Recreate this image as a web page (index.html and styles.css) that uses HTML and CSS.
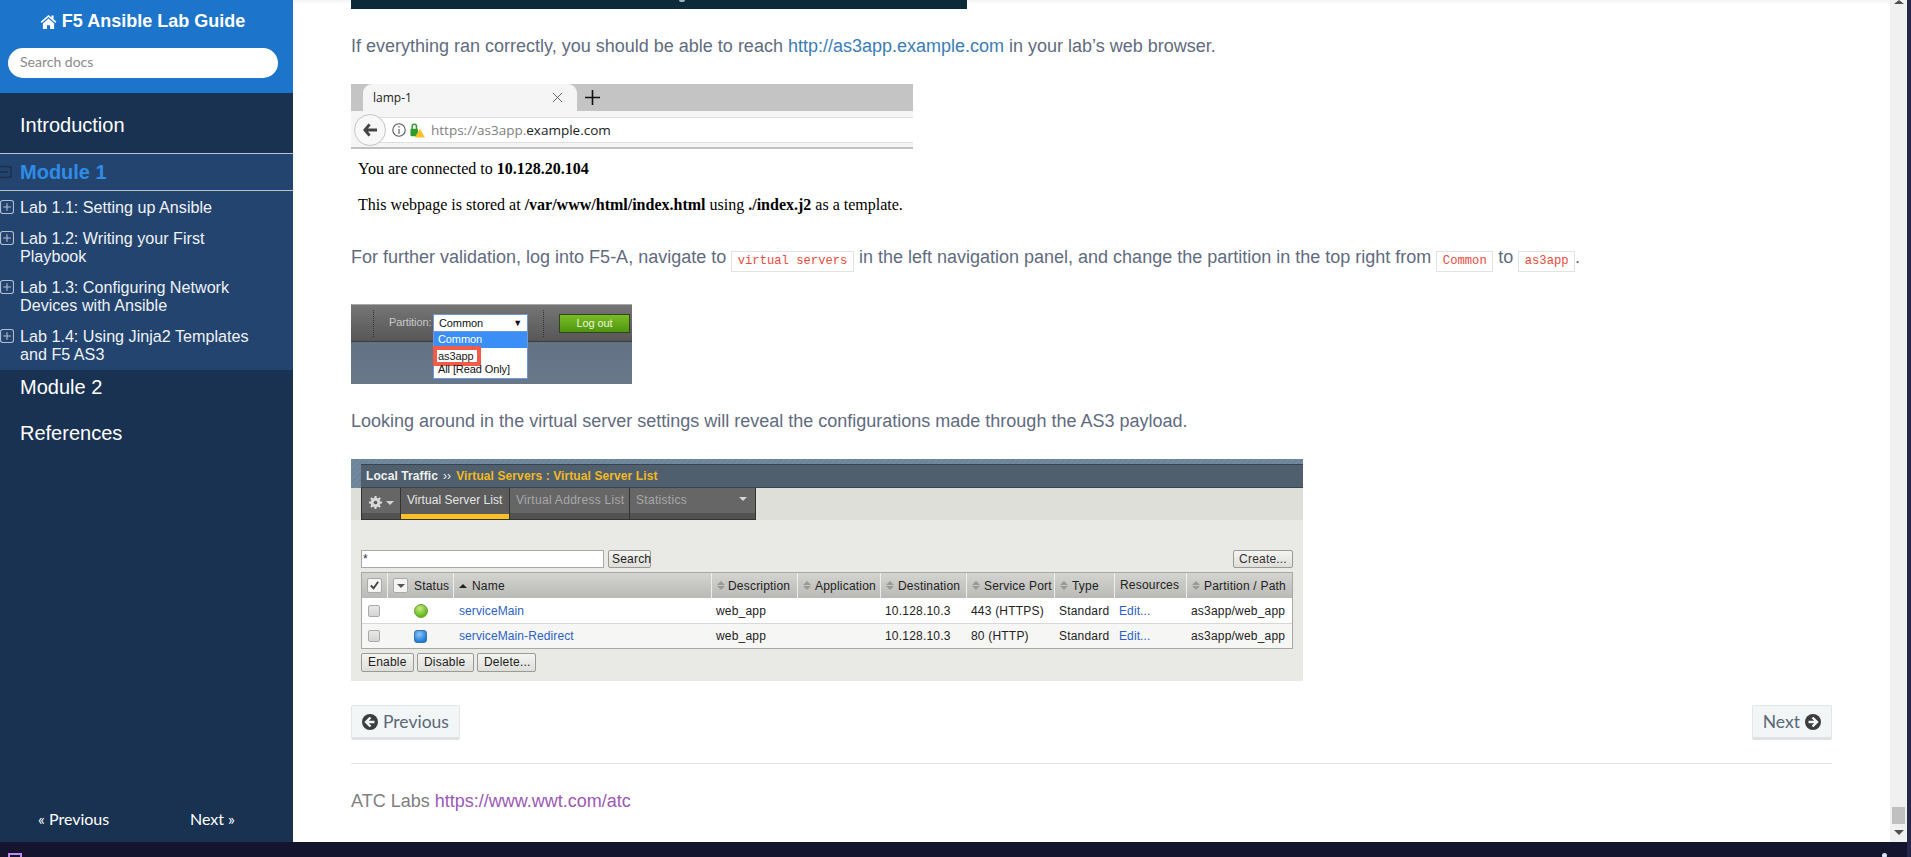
FILE: index.html
```html
<!DOCTYPE html>
<html lang="en">
<head>
<meta charset="utf-8">
<title>F5 Ansible Lab Guide</title>
<link rel="stylesheet" href="styles.css">
</head>
<body>
<div class="app">
  <div class="left">
    <div class="window">
      <aside class="sidebar">
        <header class="side-head">
          <a class="brand"><svg class="home" viewBox="0 0 18 16"><path d="M9 1 0.6 8.2 1.7 9.5 9 3.3l7.3 6.2 1.1-1.3-3-2.6V1.500h-2.200v2.200zM3 10v6h4.300v-4h3.400v4H15v-6L9 4.900z"/></svg>F5 Ansible Lab Guide</a>
          <div class="search">Search docs</div>
        </header>
        <nav class="nav">
          <a class="nav-top intro">Introduction</a>
          <a class="nav-current"><svg class="minus" viewBox="0 0 12 14"><path d="M-3 1.500h12a2 2 0 0 1 2 2v7a2 2 0 0 1-2 2H-3M0 7h8" fill="none" stroke="#1c2f4a" stroke-width="1.500"/></svg>Module 1</a>
          <ul class="sub">
            <li><svg class="plus" viewBox="0 0 13 13"><path d="M2.500.5h8a2 2 0 0 1 2 2v8a2 2 0 0 1-2 2h-8a2 2 0 0 1-2-2v-8a2 2 0 0 1 2-2zM6.500 3v7M3 6.500h7"/></svg><span>Lab 1.1: Setting up Ansible</span></li>
            <li><svg class="plus" viewBox="0 0 13 13"><path d="M2.500.5h8a2 2 0 0 1 2 2v8a2 2 0 0 1-2 2h-8a2 2 0 0 1-2-2v-8a2 2 0 0 1 2-2zM6.500 3v7M3 6.500h7"/></svg><span>Lab 1.2: Writing your First Playbook</span></li>
            <li><svg class="plus" viewBox="0 0 13 13"><path d="M2.500.5h8a2 2 0 0 1 2 2v8a2 2 0 0 1-2 2h-8a2 2 0 0 1-2-2v-8a2 2 0 0 1 2-2zM6.500 3v7M3 6.500h7"/></svg><span>Lab 1.3: Configuring Network Devices with Ansible</span></li>
            <li><svg class="plus" viewBox="0 0 13 13"><path d="M2.500.5h8a2 2 0 0 1 2 2v8a2 2 0 0 1-2 2h-8a2 2 0 0 1-2-2v-8a2 2 0 0 1 2-2zM6.500 3v7M3 6.500h7"/></svg><span>Lab 1.4: Using Jinja2 Templates and F5 AS3</span></li>
          </ul>
          <a class="nav-top">Module 2</a>
          <a class="nav-top refs">References</a>
        </nav>
        <div class="side-pager"><a>« Previous</a><a>Next »</a></div>
      </aside>

      <main class="main">
        <div class="top-shot"><i></i></div>
        <p class="para first">If everything ran correctly, you should be able to reach <a class="link">http://as3app.example.com</a> in your lab’s web browser.</p>

        <div class="shot-browser">
          <div class="tabstrip">
            <div class="tab"><span class="tab-title">lamp-1</span><svg class="tab-x" viewBox="0 0 12 12"><path d="M1 1l10 10M11 1 1 11"/></svg></div>
            <svg class="tab-new" viewBox="0 0 14 14"><path d="M7 0v14M0 7h14"/></svg>
          </div>
          <div class="urlbar">
            <div class="back"><svg viewBox="0 0 16 14"><path d="M7 1 2 7l5 6M2.500 7H15"/></svg></div>
            <div class="urlfield">
              <svg class="info" viewBox="0 0 14 14"><circle cx="7" cy="7" r="6.200"/><path d="M7 6v5M7 3v1.600"/></svg>
              <svg class="lock" viewBox="0 0 16 16"><rect x="0.500" y="6" width="8" height="8" rx="1" fill="#2e9a2a"/><path d="M2.300 6.500V3.700a2.300 2.300 0 0 1 4.600 0v2.800" fill="none" stroke="#2e9a2a" stroke-width="1.600"/><path d="M10.500 6 16 15.500H5z" fill="#f5c32c"/></svg>
              <span class="url"><span class="url-dim">https://as3app.</span>example.com</span>
            </div>
          </div>
          <div class="webtext">
            <p>You are connected to <b>10.128.20.104</b></p>
            <p>This webpage is stored at <b>/var/www/html/index.html</b> using <b>./index.j2</b> as a template.</p>
          </div>
        </div>

        <p class="para second">For further validation, log into F5-A, navigate to <code>virtual servers</code> in the left navigation panel, and change the partition in the top right from <code>Common</code> to <code>as3app</code>.</p>

        <div class="shot-partition">
          <div class="pbar">
            <i class="dots"></i>
            <span class="plabel">Partition:</span>
            <div class="pselect-wrap">
              <div class="pselect"><span>Common</span><b>▼</b></div>
              <div class="pmenu">
                <div class="popt on">Common</div>
                <div class="popt marked">as3app</div>
                <div class="popt">All [Read Only]</div>
              </div>
            </div>
            <i class="dots"></i>
            <div class="logout">Log out</div>
          </div>
        </div>

        <p class="para third">Looking around in the virtual server settings will reveal the configurations made through the AS3 payload.</p>

        <div class="shot-bigip">
          <div class="crumb"><div class="crumb-in"><b>Local Traffic</b><span class="crumb-sep">››</span><b class="crumb-y">Virtual Servers : Virtual Server List</b></div></div>
          <div class="tabrow">
            <div class="tabs">
              <div class="bt gear"><svg viewBox="0 0 14 14"><path d="M6 0h2l.3 2 1.300.6L11.300 1.400l1.400 1.400-1.200 1.700.6 1.300 1.900.2v2l-1.900.3-.6 1.300 1.200 1.600-1.400 1.400-1.700-1.200-1.300.6-.3 1.900H6l-.3-1.900-1.300-.6-1.700 1.200-1.400-1.400 1.200-1.600-.6-1.300L0 8V6l1.900-.2.600-1.300L1.300 2.800l1.400-1.400 1.700 1.200 1.300-.6z" fill="#d8d8d8"/><circle cx="7" cy="7" r="2" fill="#5c5c5c"/></svg><i class="caret"></i></div>
              <div class="bt active">Virtual Server List</div>
              <div class="bt dim addr">Virtual Address List</div>
              <div class="bt dim stats"><span>Statistics</span><i class="caret"></i></div>
            </div>
          </div>
          <div class="panel">
            <div class="searchrow">
              <div class="tinput">*</div>
              <div class="fbtn">Search</div>
              <div class="fbtn create">Create...</div>
            </div>
            <div class="ftable">
              <div class="th"><span class="cb checked"><svg viewBox="0 0 12 12"><path d="M2 6l3 3 5-7"/></svg></span></div>
              <div class="th"><span class="cb drop"><i class="caret dark"></i></span>Status</div>
              <div class="th"><i class="up"></i>Name</div>
              <div class="th"><i class="sort"></i>Description</div>
              <div class="th"><i class="sort"></i>Application</div>
              <div class="th"><i class="sort"></i>Destination</div>
              <div class="th"><i class="sort"></i>Service Port</div>
              <div class="th"><i class="sort"></i>Type</div>
              <div class="th plain">Resources</div>
              <div class="th"><i class="sort"></i>Partition / Path</div>

              <div class="td"><span class="cb"></span></div>
              <div class="td center"><i class="ball"></i></div>
              <div class="td"><a class="flink">serviceMain</a></div>
              <div class="td">web_app</div>
              <div class="td"></div>
              <div class="td">10.128.10.3</div>
              <div class="td">443 (HTTPS)</div>
              <div class="td">Standard</div>
              <div class="td"><a class="flink">Edit...</a></div>
              <div class="td">as3app/web_app</div>

              <div class="td alt"><span class="cb"></span></div>
              <div class="td alt center"><i class="square"></i></div>
              <div class="td alt"><a class="flink">serviceMain-Redirect</a></div>
              <div class="td alt">web_app</div>
              <div class="td alt"></div>
              <div class="td alt">10.128.10.3</div>
              <div class="td alt">80 (HTTP)</div>
              <div class="td alt">Standard</div>
              <div class="td alt"><a class="flink">Edit...</a></div>
              <div class="td alt">as3app/web_app</div>
            </div>
            <div class="actions"><div class="fbtn">Enable</div><div class="fbtn">Disable</div><div class="fbtn">Delete...</div></div>
          </div>
        </div>

        <div class="pager">
          <a class="btn"><svg class="arrow" viewBox="0 0 16 16"><circle cx="8" cy="8" r="8"/><path d="M8.500 3.500 4 8l4.500 4.500M4.500 8H12.500"/></svg>Previous</a>
          <a class="btn">Next<svg class="arrow" viewBox="0 0 16 16"><circle cx="8" cy="8" r="8"/><path d="M7.500 3.500 12 8l-4.500 4.500M11.500 8H3.500"/></svg></a>
        </div>
        <hr class="rule">
        <p class="foot">ATC Labs <a class="visited">https://www.wwt.com/atc</a></p>
      </main>

      <div class="scrollbar">
        <i class="sb-up"></i>
        <div class="sb-bottom"><div class="sb-thumb"></div><i class="sb-down"></i></div>
      </div>
    </div>
    <footer class="taskbar">
      <svg class="task-icon" viewBox="0 0 14 14"><path d="M1 13V1h12v12z" fill="none" stroke="#c08af0" stroke-width="2"/></svg>
      <i class="task-dot"></i>
    </footer>
  </div>
  <div class="rail"></div>
</div>
</body>
</html>
```

FILE: styles.css
```css
* { box-sizing: border-box; }
html, body { margin: 0; height: 100%; overflow: hidden; }
body { font-family: "Liberation Sans", Arial, sans-serif; background: #fff; }
p { margin: 0; }
a { text-decoration: none; }

.app { display: flex; height: 857px; }
.left { flex: 1; display: flex; flex-direction: column; min-width: 0; }
.rail { width: 4px; background: #26264a; }
.window { height: 842px; display: flex; }
.taskbar { height: 15px; background: #14142f; display: flex; justify-content: space-between; padding: 11px 20px 0 8px; overflow: hidden; }
.task-icon { width: 14px; height: 14px; flex: none; }
.task-dot { width: 5px; height: 5px; border-radius: 50%; background: #d8e4f4; flex: none; }

/* sidebar */
.sidebar { width: 293px; flex: none; background: #1a3252; color: #fff; display: flex; flex-direction: column; }
.side-head { height: 93px; background: #1c75cb; padding: 10px 8px 0; }
.brand { display: flex; justify-content: center; align-items: center; height: 22px; padding-right: 8px; font-size: 18px; font-weight: bold; color: #fff; }
.home { width: 17px; height: 15px; margin-right: 5px; fill: #fff; }
.search { margin-top: 16px; width: 270px; height: 30px; border-radius: 15px; background: #fff; color: #8a8a8a; font: 14px/28px Lato, sans-serif; padding-left: 12px; }
.nav { display: flex; flex-direction: column; }
.nav-top { display: block; color: #fff; font-size: 20px; line-height: 34px; height: 36px; padding-left: 20px; }
.intro { height: 60px; line-height: 24px; padding-top: 20px; }
.refs { margin-top: 10px; }
.nav-current { display: flex; align-items: center; height: 38px; border-top: 1px solid #b9c2cf; border-bottom: 1px solid #b9c2cf; background: #244470; color: #2f8ce6; font-size: 20px; font-weight: bold; }
.minus { width: 12px; height: 14px; margin-right: 8px; flex: none; }
.sub { list-style: none; margin: 0; padding: 7px 40px 7px 0; background: #244470; display: flex; flex-direction: column; gap: 13px; height: 179px; }
.sub li { display: flex; font-size: 16.150px; line-height: 18px; color: #eef2f6; }
.plus { width: 14px; height: 14px; margin: 2px 6px 0 0; flex: none; fill: none; stroke: #b4bfce; stroke-width: 1; }
.side-pager { margin-top: auto; height: 33px; display: flex; font: 16px/20px Lato, sans-serif; color: #fff; padding-left: 38px; }
.side-pager a:first-child { width: 152px; }

/* main */
.main { flex: 1; min-width: 0; padding: 0 58px; overflow: hidden; background: linear-gradient(#f3f3f3, #fff 4px); }
.top-shot { width: 616px; height: 9px; background: #0b2a3a; overflow: hidden; padding-left: 328px; }
.top-shot i { display: block; width: 6px; height: 2px; border-radius: 0 0 3px 3px; background: #9fb2bd; }
.para { font-size: 18px; line-height: 24px; color: #5f6b80; }
.first { margin: 25px 0 26px; }
.second { margin: 27px 0 32px; }
.third { margin: 25px 0 26px; }
.link { color: #3a7cb5; }
code { font: 12.200px/19px "Liberation Mono", monospace; color: #e74c3c; background: #fff; border: 1px solid #e1e4e5; padding: 0 5.500px; display: inline-block; vertical-align: -1px; }

/* browser screenshot */
.shot-browser { width: 562px; height: 134px; overflow: hidden; background: #fff; }
.tabstrip { height: 27px; background: #c4c4c4; display: flex; align-items: center; padding-left: 12px; }
.tab { width: 214px; height: 27px; background: #f5f5f5; border-radius: 9px 9px 0 0; display: flex; align-items: center; justify-content: space-between; padding: 0 14px 0 10px; }
.tab-title { font: 12px "Open Sans", sans-serif; color: #222; }
.tab-x { width: 11px; height: 11px; fill: none; stroke: #555; stroke-width: 1; }
.tab-new { width: 15px; height: 15px; margin-left: 8px; fill: none; stroke: #111; stroke-width: 1.500; }
.urlbar { height: 38px; background: #f5f5f5; border-bottom: 2px solid #c0c0c0; padding-top: 6px; position: relative; }
.urlfield { height: 26px; margin-left: 18px; background: #fff; border-top: 1px solid #dedede; border-bottom: 1px solid #dedede; display: flex; align-items: center; padding-left: 23px; }
.back { position: absolute; left: 3px; top: 3px; width: 32px; height: 32px; border-radius: 50%; background: #f8f8f8; border: 1px solid #c4c4c4; display: flex; align-items: center; justify-content: center; }
.back svg { width: 15px; height: 14px; fill: none; stroke: #444; stroke-width: 3; }
.info { width: 14px; height: 14px; fill: none; stroke: #555; stroke-width: 1.100; flex: none; }
.lock { width: 15px; height: 15px; margin-left: 4px; flex: none; }
.url { font: 13.500px "Open Sans", sans-serif; color: #222; margin-left: 6px; }
.url-dim { color: #808080; }
.webtext { font: 16px/24px "Liberation Serif", serif; color: #000; padding: 8px 0 0 7px; }
.webtext p + p { margin-top: 12px; }

/* partition screenshot */
.shot-partition { width: 281px; height: 80px; background: linear-gradient(#5e6d82, #687889); }
.pbar { height: 38px; background: linear-gradient(#757575, #575757); border-top: 1px solid #a8a8a8; border-bottom: 1px solid #3c3c3c; display: flex; align-items: flex-start; padding: 5px 0 0 22px; font-size: 11px; letter-spacing: -.1px; }
.dots { width: 1px; height: 27px; border-left: 1px dotted #333; flex: none; }
.plabel { color: #c8c8c8; margin: 6px 0 0 15px; width: 44px; }
.pselect-wrap { width: 95px; margin-top: 4px; position: relative; flex: none; margin-right: 15px; }
.pselect { height: 18px; background: #fff; border: 1px solid #6f96d6; display: flex; justify-content: space-between; align-items: center; padding: 0 5px; color: #111; }
.pselect b { font-size: 9px; font-weight: normal; }
.pmenu { position: absolute; left: 0; right: 0; top: 18px; height: 47px; background: #fff; border: 1px solid #6f96d6; border-top: 0; color: #111; }
.popt { height: 15px; line-height: 15px; padding-left: 4px; }
.popt.on { height: 16px; background: #3a8ef5; color: #fff; }
.popt.marked { width: 48px; height: 20px; margin: -2px 0 -4px -1px; line-height: 12px; padding: 0 0 0 1px; border: 4px solid #f25a4a; background: #fff; color: #222; }
.logout { width: 71px; height: 19px; margin: 4px 0 0 15px; background: linear-gradient(#78bd22, #4f9612); border: 1px solid #34431c; color: #eaf5da; text-align: center; line-height: 17px; }

/* BIG-IP screenshot */
.shot-bigip { width: 952px; height: 222px; background: #e9e9e5; font-size: 12px; letter-spacing: .2px; overflow: hidden; }
.crumb { height: 29px; padding: 5px 0 0 10px; background: repeating-linear-gradient(135deg, #6d8398 0 2px, #738a9e 2px 4px); letter-spacing: .1px; }
.crumb-in { height: 24px; background: #4f5f6e; border-top: 1px solid #39434d; border-bottom: 1px solid #39434d; color: #f0f0f0; padding-left: 5px; line-height: 22px; display: flex; }
.crumb-sep { margin: 0 5px; }
.crumb-y { color: #f2b91f; }
.tabrow { height: 32px; background: #dfdfda; padding-left: 10px; }
.tabs { width: 395px; height: 32px; display: flex; background: #333; border: 1px solid #333; border-top: 0; gap: 1px; }
.bt { background: linear-gradient(#666 0 80%, #525252 80%); color: #e4e4e4; height: 31px; padding: 4px 0 0 6px; line-height: 16px; letter-spacing: .3px; }
.gear { width: 38px; padding: 8px 0 0 7px; display: flex; gap: 4px; }
.gear svg { width: 13px; height: 13px; flex: none; }
.caret { display: inline-block; width: 0; height: 0; border: 4px solid transparent; border-top: 4px solid #d4d4d4; border-bottom: 0; margin-top: 5px; }
.caret.dark { border-top-color: #555; margin-top: 0; }
.active { width: 108px; background: #5c5c5c; border-bottom: 5px solid #fac024; letter-spacing: .05px; }
.addr { width: 119px; }
.stats { flex: 1; display: flex; justify-content: space-between; padding-right: 8px; }
.dim { color: #a8a8a8; }
.panel { padding: 30px 10px 0; }
.searchrow { display: flex; height: 18px; gap: 4px; }
.tinput { width: 243px; background: #fff; border: 1px solid #a9a9a9; padding-left: 1px; line-height: 16px; color: #333; }
.fbtn { height: 19px; line-height: 16px; padding: 0 6px; background: linear-gradient(#f4f4f1, #dededa); border: 1px solid #9a9a96; border-radius: 2px; color: #222; }
.searchrow .fbtn { height: 18px; padding: 0 3px; width: 43px; }
.searchrow .create { margin-left: auto; width: 60px; text-align: center; padding: 0; color: #333; }
.ftable { margin-top: 4px; width: 932px; height: 77px; display: grid; grid-template-columns: 26px 66px 258px 86px 83px 86px 88px 60px 72px 105px; grid-template-rows: 25px 26px 24px; border: 1px solid #a8a8a8; background: #fff; }
.th { background: linear-gradient(#d4d4d0, #b9b9b5); border-right: 1px solid #eee; display: flex; align-items: center; padding-left: 5px; color: #222; gap: 4px; white-space: nowrap; overflow: hidden; }
.th:nth-child(2) { padding-left: 5px; gap: 6px; }
.th:nth-child(3) { gap: 3px; }
.th:nth-child(4) { gap: 3px; }
.th:nth-child(10) { border-right: 0; }
.th.plain { padding-bottom: 2px; }
.td { display: flex; align-items: center; padding-left: 4px; color: #222; border-bottom: 1px solid #d8d8d4; white-space: nowrap; overflow: hidden; }
.td.alt { background: #f6f6f4; border-bottom: 0; }
.center { justify-content: flex-end; padding-right: 26px; }
.flink { color: #2b62c8; letter-spacing: .1px; }
.td:nth-child(13) .flink, .td:nth-child(23) .flink { margin-left: 1px; }
.cb { width: 12px; height: 12px; background: linear-gradient(#e8e8e6, #d4d4d2); border: 1px solid #aaa; border-radius: 2px; display: flex; align-items: center; justify-content: center; flex: none; margin-left: 2px; }
.th .cb { width: 15px; height: 15px; background: #f4f4f2; margin-left: 0; }
.cb svg { width: 11px; height: 11px; fill: none; stroke: #444; stroke-width: 2; }
.up { width: 0; height: 0; border: 4px solid transparent; border-bottom: 4px solid #222; border-top: 0; margin-right: 2px; }
.sort { width: 8px; height: 9px; display: flex; flex-direction: column; justify-content: space-between; flex: none; }
.sort::before, .sort::after { content: ""; width: 0; height: 0; border: 4px solid transparent; }
.sort::before { border-bottom: 4px solid #999; border-top: 0; }
.sort::after { border-top: 4px solid #999; border-bottom: 0; }
.ball { width: 14px; height: 14px; border-radius: 50%; background: radial-gradient(circle at 40% 30%, #c8ec82, #62b81c 70%); border: 1px solid #6c9c3a; }
.square { width: 13px; height: 13px; border-radius: 3px; background: radial-gradient(circle at 40% 30%, #8cc8f4, #1f7ad8 75%); border: 1px solid #3a74b0; margin-right: 1px; }
.actions { display: flex; gap: 3px; margin-top: 4px; }
.actions .fbtn:nth-child(1) { width: 53px; }
.actions .fbtn:nth-child(2) { width: 57px; }
.actions .fbtn:nth-child(3) { width: 59px; }

/* pager */
.pager { display: flex; justify-content: space-between; margin-top: 24px; }
.btn { height: 35px; display: flex; align-items: center; gap: 5px; padding: 0 10px; background: #f3f6f6; border: 1px solid #e2e6e6; border-bottom: 3px solid #dde2e2; border-radius: 2px; font: 17.500px Lato, sans-serif; color: #5a6878; }
.arrow { width: 16px; height: 16px; flex: none; }
.arrow circle { fill: #3d3d3d; }
.arrow path { fill: none; stroke: #f3f6f6; stroke-width: 2.400; }
.rule { margin: 23px 0 0; border: 0; border-top: 1px solid #e1e4e5; }
.foot { margin-top: 25px; font-size: 18px; line-height: 24px; color: #808080; }
.visited { color: #9b59b6; }

/* scrollbar */
.scrollbar { width: 17px; flex: none; background: #f0f0f0; display: flex; flex-direction: column; justify-content: space-between; align-items: center; }
.sb-up { width: 0; height: 0; border: 5px solid transparent; border-bottom: 4px solid #505050; border-top: 0; }
.sb-bottom { display: flex; flex-direction: column; align-items: center; padding-bottom: 7px; }
.sb-thumb { width: 13px; height: 17px; background: #c0c0c0; margin-bottom: 6px; }
.sb-down { width: 0; height: 0; border: 5px solid transparent; border-top: 5px solid #505050; border-bottom: 0; }
```
